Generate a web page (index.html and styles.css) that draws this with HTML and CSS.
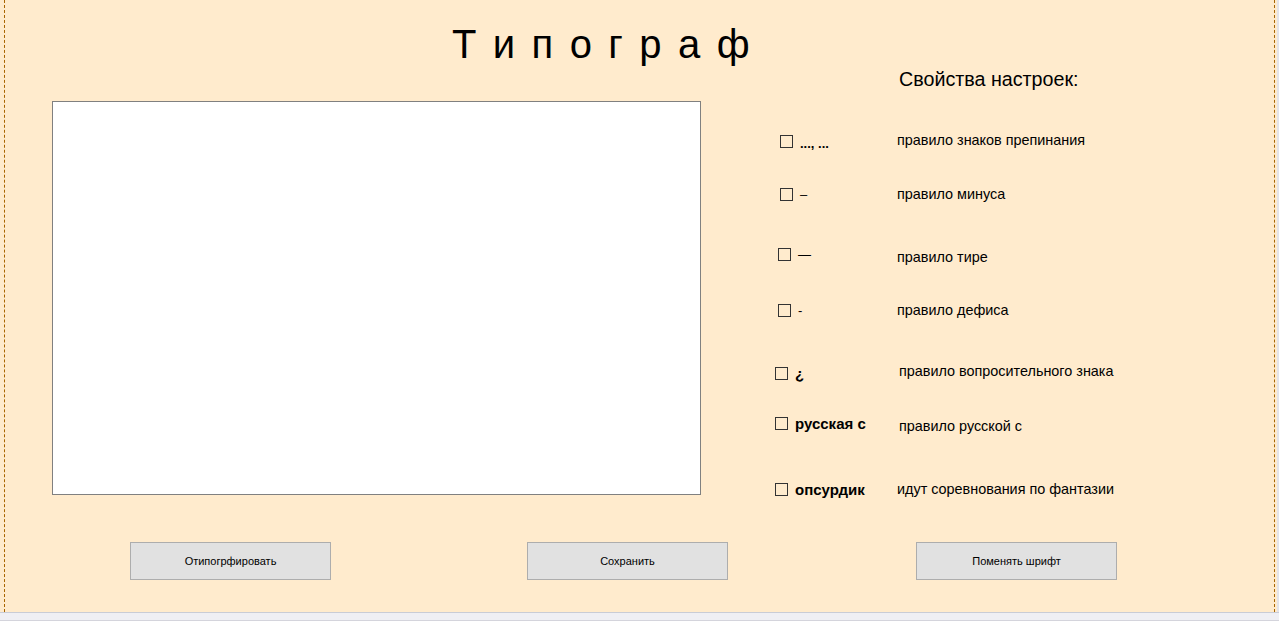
FILE: index.html
```html
<!DOCTYPE html>
<html lang="ru">
<head>
<meta charset="utf-8">
<title>Типограф</title>
<link rel="stylesheet" href="styles.css">
</head>
<body>
<div class="window">
  <div class="canvas">
    <div class="form">
      <h1 class="title">Т и п о г р а ф</h1>
      <div class="main">
        <textarea class="editor"></textarea>
        <div class="settings">
          <h2 class="settings-title">Свойства настроек:</h2>
          <div class="rule r1">
            <label class="opt"><input type="checkbox"><span class="sym dots">..., ...</span></label>
            <span class="desc">правило знаков препинания</span>
          </div>
          <div class="rule r2">
            <label class="opt"><input type="checkbox"><span class="sym">–</span></label>
            <span class="desc">правило минуса</span>
          </div>
          <div class="rule r3">
            <label class="opt"><input type="checkbox"><span class="sym">—</span></label>
            <span class="desc">правило тире</span>
          </div>
          <div class="rule r4">
            <label class="opt"><input type="checkbox"><span class="sym">-</span></label>
            <span class="desc">правило дефиса</span>
          </div>
          <div class="rule r5">
            <label class="opt"><input type="checkbox"><span class="sym bold">¿</span></label>
            <span class="desc">правило вопросительного знака</span>
          </div>
          <div class="rule r6">
            <label class="opt"><input type="checkbox"><span class="sym bold">русская с</span></label>
            <span class="desc">правило русской с</span>
          </div>
          <div class="rule r7">
            <label class="opt"><input type="checkbox"><span class="sym bold">опсурдик</span></label>
            <span class="desc">идут соревнования по фантазии</span>
          </div>
        </div>
      </div>
      <div class="actions">
        <button class="btn">Отипогрфировать</button>
        <button class="btn btn-save">Сохранить</button>
        <button class="btn btn-font">Поменять шрифт</button>
      </div>
    </div>
    <div class="vrail"></div>
  </div>
  <div class="hrail"></div>
</div>
</body>
</html>
```

FILE: styles.css
```css
* { box-sizing: border-box; }

html, body {
  margin: 0;
  padding: 0;
  width: 1279px;
  height: 621px;
  overflow: hidden;
  background: #ffebcd;
  font-family: "Liberation Sans", Arial, sans-serif;
  color: #000;
}

.window {
  display: flex;
  flex-direction: column;
  height: 621px;
}

.canvas {
  display: flex;
  height: 612px;
}

.form {
  flex: 1;
  margin-left: 4px;
  margin-right: 2px;
  border-left: 1px dashed #a86400;
  border-right: 1px dashed #a86400;
  display: flex;
  flex-direction: column;
}

.vrail {
  width: 2px;
  background: #e4e4ea;
}

.hrail {
  height: 9px;
  background: #efeff4;
  border-top: 1px solid #c9ccd6;
  border-bottom: 1px solid #d4d4dc;
}

.title {
  margin: 21px 0 0 447px;
  font-size: 40px;
  line-height: 46px;
  font-weight: normal;
  word-spacing: 5.3px;
  white-space: pre;
}

.main {
  display: flex;
  height: 432px;
}

.editor {
  margin: 34px 0 0 47px;
  width: 649px;
  height: 394px;
  border: 1px solid #808080;
  background: #fff;
  resize: none;
  padding: 2px;
  outline: none;
}

.settings {
  margin-left: 74px;
  display: flex;
  flex-direction: column;
}

.settings-title {
  margin: 1px 0 0 124px;
  font-size: 19.7px;
  line-height: 23px;
  font-weight: normal;
}

.rule {
  display: grid;
  grid-template-columns: 122px auto;
  align-items: center;
  height: 20px;
}

.opt {
  display: flex;
  align-items: center;
}

.opt input {
  appearance: none;
  -webkit-appearance: none;
  margin: 0;
  width: 13px;
  height: 13px;
  border: 1px solid #333;
  background: transparent;
}

.sym {
  margin-left: 7px;
  font-size: 13px;
}

.sym.dots {
  font-weight: bold;
  font-size: 13px;
  position: relative;
  top: 2px;
}

.sym.bold {
  font-weight: bold;
  font-size: 15px;
}

.desc {
  font-size: 14.4px;
}

.r1 { margin-top: 40px; }
.r1 .opt { padding-left: 5px; }
.r1 .desc { padding-bottom: 2px; }
.r2 { margin-top: 33px; }
.r2 .opt { padding-left: 5px; }
.r3 { margin-top: 41px; }
.r3 .opt { padding-left: 3px; padding-bottom: 2px; }
.r3 .desc { padding-top: 4px; }
.r4 { margin-top: 35px; }
.r4 .opt { padding-left: 3px; }
.r5 { margin-top: 41px; }
.r5 .opt { padding-top: 4px; }
.r5 .desc { margin-left: 2px; padding-bottom: 2px; }
.r6 { margin-top: 33px; }
.r6 .opt { padding-bottom: 2px; }
.r6 .desc { margin-left: 2px; padding-top: 4px; }
.r7 { margin-top: 45px; }

.actions {
  display: flex;
  margin: 43px 0 0 125px;
}

.btn {
  width: 201px;
  height: 38px;
  background: #e1e1e1;
  border: 1px solid #adadad;
  border-radius: 0;
  font-family: "Liberation Sans", Arial, sans-serif;
  font-size: 11px;
  color: #000;
  padding: 0;
}

.btn-save { margin-left: 196px; }
.btn-font { margin-left: 188px; }
```
